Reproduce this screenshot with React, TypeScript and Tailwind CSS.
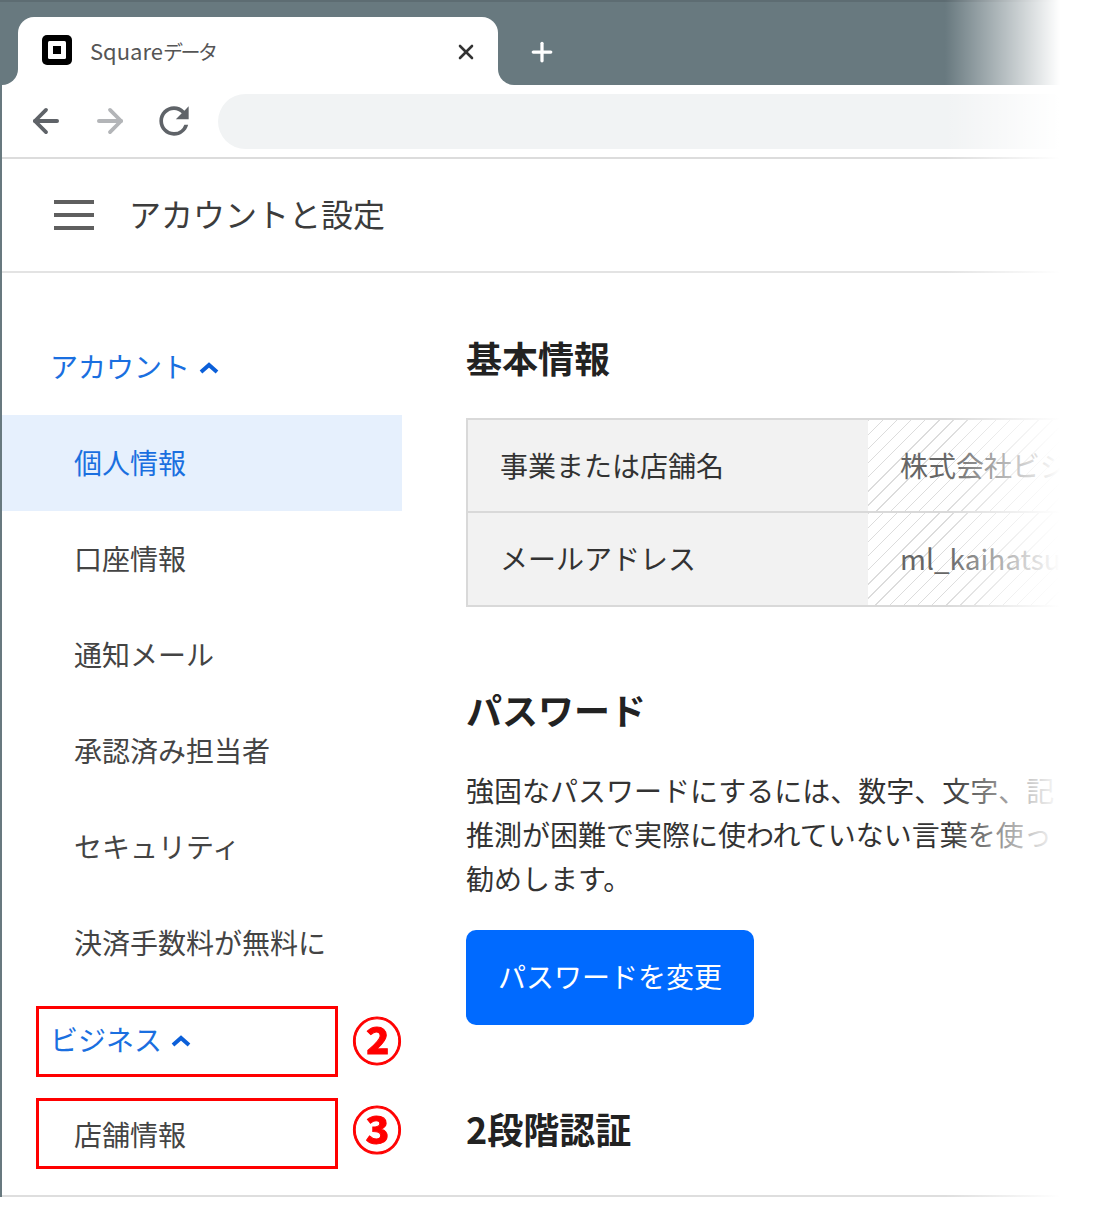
import { ArrowLeft, ArrowRight, Plus, X } from "lucide-react";

const items = ["個人情報", "口座情報", "通知メール", "承認済み担当者", "セキュリティ", "決済手数料が無料に"];

function Chevron() {
  return (
    <svg width="22" height="14" viewBox="0 0 22 14" fill="none" className="ml-2 mt-1">
      <path d="M3 11l8-7 8 7" stroke="#0b5fd9" strokeWidth="4" />
    </svg>
  );
}

export default function App() {
  return (
    <div className="relative w-[1106px] h-[1218px] overflow-hidden bg-white text-[#333] font-['Noto_Sans_CJK_JP','Noto_Sans',sans-serif]">
      {/* Tab strip */}
      <div className="h-[85px] bg-[#68797f] border-t-2 border-t-[#5d6c72] flex items-end pl-[18px]">
        <div className="relative w-[480px] h-[68px] bg-white rounded-t-[16px] flex items-center pl-[23px] pb-[2px]">
          <div className="absolute left-[-16px] bottom-0 w-4 h-4 bg-white">
            <div className="w-4 h-4 bg-[#68797f] rounded-br-[16px]" />
          </div>
          <div className="absolute right-[-16px] bottom-0 w-4 h-4 bg-white">
            <div className="w-4 h-4 bg-[#68797f] rounded-bl-[16px]" />
          </div>
          <svg width="32" height="32" viewBox="0 0 32 32">
            <rect x="1" y="1" width="30" height="30" rx="5" fill="#000" />
            <rect x="7" y="7" width="18" height="18" rx="1.5" fill="#fff" />
            <rect x="12" y="12" width="8" height="8" fill="#000" />
          </svg>
          <span className="ml-[17px] text-[22px] leading-none text-[#555] whitespace-nowrap">
            Square<span className="text-[20px] tracking-[-2.5px]">データ</span>
          </span>
          <X className="absolute right-[20px] top-[23px]" size={24} strokeWidth={2.6} color="#333" />
        </div>
        <Plus className="ml-[29px] mb-[18px]" size={30} strokeWidth={2.6} color="#fff" />
      </div>

      <div className="border-l-2 border-l-[#68797f]">
        {/* Browser toolbar */}
        <div className="h-[74px] border-b-2 border-b-[#dcdcdc] flex items-center pl-[25px]">
          <ArrowLeft size={38} strokeWidth={2.4} color="#5f6368" />
          <ArrowRight className="ml-[26px]" size={38} strokeWidth={2.4} color="#b3b5b8" />
          <svg className="ml-[23px]" width="44" height="44" viewBox="0 0 24 24" fill="#5f6368">
            <path d="M17.65 6.35A7.958 7.958 0 0 0 12 4c-4.42 0-7.99 3.58-7.99 8s3.57 8 7.99 8c3.73 0 6.84-2.55 7.73-6h-2.08A5.99 5.99 0 0 1 12 18c-3.31 0-6-2.69-6-6s2.69-6 6-6c1.66 0 3.14.69 4.22 1.78L13 11h7V4l-2.35 2.35z" />
          </svg>
          <div className="ml-[22px] w-[860px] h-[55px] rounded-full bg-[#f1f3f4]" />
        </div>

        {/* Page header */}
        <div className="h-[114px] border-b-2 border-b-[#e3e3e3] flex items-center pl-[52px]">
          <div className="w-10 flex flex-col gap-[9px]">
            <div className="h-1 bg-[#5f5f5f]" />
            <div className="h-1 bg-[#5f5f5f]" />
            <div className="h-1 bg-[#5f5f5f]" />
          </div>
          <h1 className="ml-[35px] pb-[4px] text-[32px] leading-none text-[#3c3c3c]">アカウントと設定</h1>
        </div>

        {/* Body */}
        <div className="h-[924px] border-b-2 border-b-[#dedede] flex">
          <aside className="w-[400px] shrink-0 pt-[46px]">
            <div className="h-24 flex items-center pl-[48px] pb-[2px] text-[28px] text-[#1a6fe0]">
              アカウント
              <Chevron />
            </div>
            {items.map((label, i) => (
              <div
                key={label}
                className={
                  i === 0
                    ? "h-24 flex items-center pl-[72px] pb-[2px] text-[28px] whitespace-nowrap bg-[#e6f0fd] text-[#1a6fe0]"
                    : "h-24 flex items-center pl-[72px] pb-[2px] text-[28px] whitespace-nowrap text-[#444]"
                }
              >
                {label}
              </div>
            ))}
            <div className="mt-[15px] ml-[34px] flex items-center">
              <div className="w-[303px] h-[71px] border-[3px] border-[#f00] flex items-center pl-[11px] pb-[6px] text-[28px] text-[#1a6fe0]">
                ビジネス
                <Chevron />
              </div>
              <span className="ml-[14px] pb-[8px] text-[50px] leading-none font-bold text-[#f00] [-webkit-text-stroke:1px_#f00]">②</span>
            </div>
            <div className="mt-[21px] ml-[34px] flex items-center">
              <div className="w-[303px] h-[71px] border-[3px] border-[#f00] flex items-center pl-[35px] text-[28px] text-[#444]">
                店舗情報
              </div>
              <span className="ml-[14px] pb-[14px] text-[50px] leading-none font-bold text-[#f00] [-webkit-text-stroke:1px_#f00]">③</span>
            </div>
          </aside>

          <main className="flex-1 pl-[64px] pt-[62px] overflow-hidden">
            <h2 className="text-[36px] leading-[44px] font-bold text-[#222]">基本情報</h2>
            <div className="mt-[39px] w-[700px] border-2 border-[#d9d9d9] text-[28px]">
              <div className="h-[93px] flex border-b-2 border-b-[#d9d9d9]">
                <div className="w-[400px] flex items-center pl-8 pb-[2px] bg-[#f2f2f2]">事業または店舗名</div>
                <div className="flex-1 flex items-center pl-8 pb-[2px] text-[#666] bg-[repeating-linear-gradient(135deg,#dcdcdc_0,#dcdcdc_1px,#fff_1px,#fff_10px)]">
                  株式会社ビジ
                </div>
              </div>
              <div className="h-[92px] flex">
                <div className="w-[400px] flex items-center pl-8 pb-[2px] bg-[#f2f2f2]">メールアドレス</div>
                <div className="flex-1 flex items-center pl-8 pb-[2px] text-[#666] bg-[repeating-linear-gradient(135deg,#dcdcdc_0,#dcdcdc_1px,#fff_1px,#fff_10px)]">
                  ml_kaihatsu
                </div>
              </div>
            </div>

            <h2 className="mt-[80px] text-[36px] leading-[44px] font-bold text-[#222]">パスワード</h2>
            <p className="mt-[37px] text-[28px] leading-[44px] whitespace-nowrap">
              強固なパスワードにするには、数字、文字、記
              <br />
              推測が困難で実際に使われていない言葉を使っ
              <br />
              勧めします。
            </p>
            <button className="mt-[30px] w-[288px] h-[95px] pb-1 rounded-[10px] bg-[#006aff] text-white text-[28px]">
              パスワードを変更
            </button>

            <h2 className="mt-[81px] text-[36px] leading-[44px] font-bold text-[#222]">2段階認証</h2>
          </main>
        </div>
      </div>

      {/* Screenshot fades out to white on the right */}
      <div className="absolute top-0 bottom-0 left-[945px] w-[115px] bg-gradient-to-r from-transparent to-white pointer-events-none" />
      <div className="absolute top-0 bottom-0 left-[1060px] right-0 bg-white pointer-events-none" />
    </div>
  );
}
